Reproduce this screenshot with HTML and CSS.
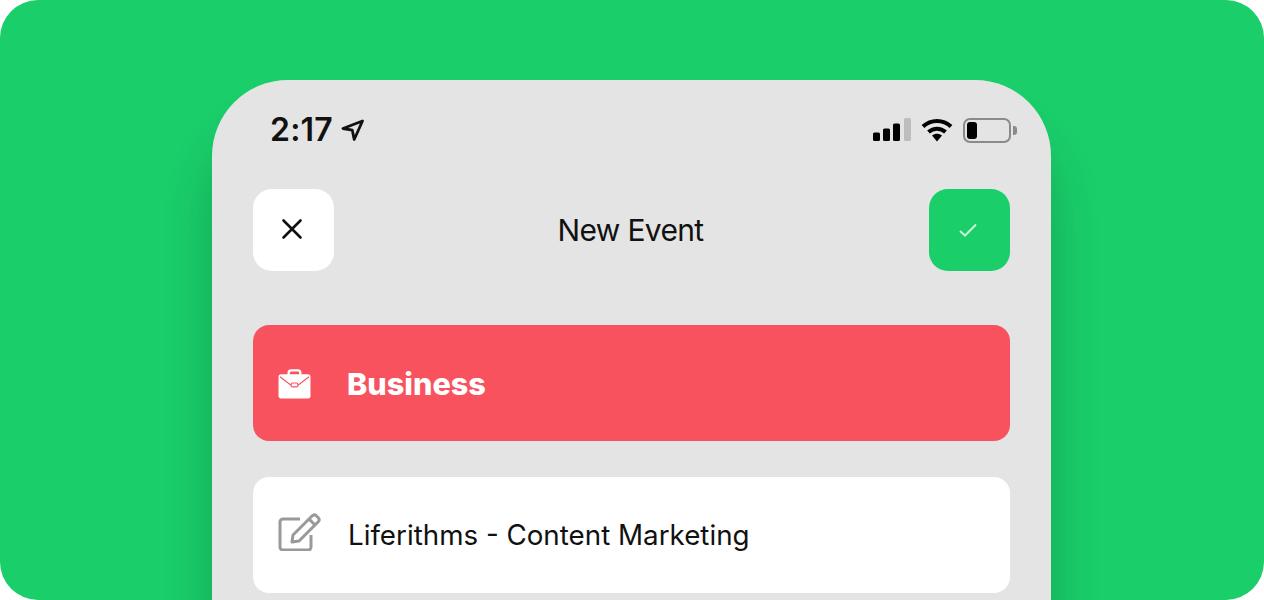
FILE: index.html
```html
<!DOCTYPE html>
<html lang="en">
  <head>
    <meta charset="utf-8">
    <title>New Event</title>
    <link rel="stylesheet" href="styles.css">
  </head>
  <body>
    <div class="card">
      <div class="phone">
        <div class="status">
          <div class="status-left">
            <span class="time">2:17</span>
            <svg class="arrow" width="24" height="24" viewBox="0 0 24 24"><path d="M22.500 3 3 10.500l9.300 1.700 1.900 9.300z" fill="none" stroke="#111" stroke-width="2.800" stroke-linejoin="round"/></svg>
          </div>
          <div class="status-right">
            <svg width="38" height="24" viewBox="0 0 38 24"><rect x="0" y="14.500" width="7" height="8.500" rx="1.500" fill="#000"/><rect x="10" y="10.500" width="7" height="12.500" rx="1.500" fill="#000"/><rect x="20" y="5.500" width="7" height="17.500" rx="1.500" fill="#000"/><rect x="31" y="0" width="7" height="23" rx="1.500" fill="#bdbdbd"/></svg>
            <svg class="wifi" width="32" height="26" viewBox="0 0 32 26"><path d="M2 9.500C10 2 22 2 30 9.500" fill="none" stroke="#000" stroke-width="4"/><path d="M7.500 15c5-4.500 12-4.500 17 0" fill="none" stroke="#000" stroke-width="4"/><path d="M11 18.500c3-2.300 7-2.300 10 0l-5 6z" fill="#000"/></svg>
            <div class="battery"><div class="battery-level"></div></div>
            <div class="battery-tip"></div>
          </div>
        </div>

        <div class="header">
          <div class="btn btn-close">
            <svg width="22" height="22" viewBox="0 0 22 22"><path d="M2.500 2.500l17 17M19.500 2.500l-17 17" stroke="#111" stroke-width="2.600" stroke-linecap="round"/></svg>
          </div>
          <div class="title">New Event</div>
          <div class="btn btn-ok">
            <svg width="20" height="16" viewBox="0 0 20 16"><path d="M2 9l5 4.500L18 2.500" fill="none" stroke="#c9f5da" stroke-width="2"/></svg>
          </div>
        </div>

        <div class="row row-category">
          <svg class="row-icon" width="35" height="31" viewBox="0 0 36 32"><path d="M12 8V5C12 3.500 13 2.500 14.500 2.500h7C23 2.500 24 3.500 24 5v3" fill="none" stroke="#fff" stroke-width="2.400"/><path d="M4 6.500h28c1.400 0 2.500 1 2.500 2.500v20c0 1.400-1 2.500-2.500 2.500H4c-1.400 0-2.500-1-2.500-2.500V9C1.500 7.500 2.500 6.500 4 6.500z" fill="#fff"/><path d="M3 9l11 8.500h8L33 9" fill="none" stroke="#f9525f" stroke-width="1.200"/><rect x="14.500" y="15.500" width="7" height="4" rx="1.500" fill="#fff" stroke="#f9525f" stroke-width="1.200"/></svg>
          <span class="category-name">Business</span>
        </div>

        <div class="row row-input">
          <svg class="row-icon icon-edit" width="44" height="38" viewBox="0 0 44 38"><path d="M22 6H5C3.300 6 2 7.300 2 9v25c0 1.700 1.300 3 3 3h25c1.700 0 3-1.300 3-3V22" fill="none" stroke="#999" stroke-width="3"/><path d="M15 22l-1 7 7-1L40 9c1.500-1.500 1.500-3 .3-4.300l-2-2C37 1.500 35.500 1.500 34 3z" fill="none" stroke="#999" stroke-width="3" stroke-linejoin="round"/><path d="M31 6l6 6" stroke="#999" stroke-width="3"/></svg>
          <span class="input-text">Liferithms - Content Marketing</span>
        </div>
      </div>
    </div>
  </body>
</html>
```

FILE: styles.css
```css
html, body {
  height: 100%;
}
body {
  margin: 0;
  background: #fff;
  font-family: Inter, "Liberation Sans", sans-serif;
  overflow: hidden;
}
.card {
  height: 600px;
  padding-top: 80px;
  box-sizing: border-box;
  background: #1ace6a;
  border-radius: 38px;
  overflow: hidden;
}
.phone {
  width: 839px;
  height: 620px;
  margin-left: 212px;
  padding: 0 41px;
  box-sizing: border-box;
  background: #e4e4e4;
  border-radius: 76px 76px 0 0;
  box-shadow: 0 50px 50px rgba(0, 0, 0, 0.2);
}

/* status bar */
.status {
  height: 109px;
  display: flex;
  justify-content: space-between;
  align-items: flex-start;
  padding: 30px 0 0 17px;
  box-sizing: border-box;
}
.status-left {
  display: flex;
  align-items: center;
  gap: 7px;
}
.time {
  font-size: 32px;
  line-height: 40px;
  font-weight: 600;
  color: #111;
  letter-spacing: 0.2px;
}
.status-right {
  display: flex;
  align-items: center;
  height: 40px;
  margin-right: -7px;
}
.wifi {
  margin-left: 10px;
}
.battery {
  width: 48px;
  height: 25px;
  margin-left: 10px;
  padding: 2px;
  box-sizing: border-box;
  border: 2px solid #8a8a8a;
  border-radius: 7px;
}
.battery-level {
  width: 10px;
  height: 100%;
  background: #000;
  border-radius: 3px;
}
.battery-tip {
  width: 4px;
  height: 9px;
  margin-left: 2px;
  background: #8a8a8a;
  border-radius: 0 3px 3px 0;
}

/* header */
.header {
  height: 82px;
  display: flex;
  justify-content: space-between;
  align-items: center;
  margin-bottom: 54px;
}
.btn {
  width: 81px;
  height: 82px;
  border-radius: 19px;
  display: flex;
  align-items: center;
  justify-content: center;
}
.btn-close {
  background: #fff;
}
.btn-close svg {
  margin: -2px 3px 0 0;
}
.btn-ok {
  background: #1ace6a;
}
.btn-ok svg {
  margin-right: 3px;
}
.title {
  font-size: 30px;
  color: #111;
  letter-spacing: -0.65px;
  margin-right: 2px;
}

/* rows */
.row {
  height: 116px;
  border-radius: 16px;
  display: flex;
  align-items: center;
}
.row-category {
  background: #f9525f;
  padding-left: 24px;
  margin-bottom: 36px;
}
.row-input {
  background: #fff;
  padding-left: 25px;
}
.row-icon {
  flex-shrink: 0;
}
.icon-edit {
  margin-top: -6px;
}
.category-name {
  margin-left: 35px;
  font-size: 30.6px;
  font-weight: 800;
  color: #fff;
}
.input-text {
  margin-left: 26px;
  font-size: 27.75px;
  color: #111;
}
```
